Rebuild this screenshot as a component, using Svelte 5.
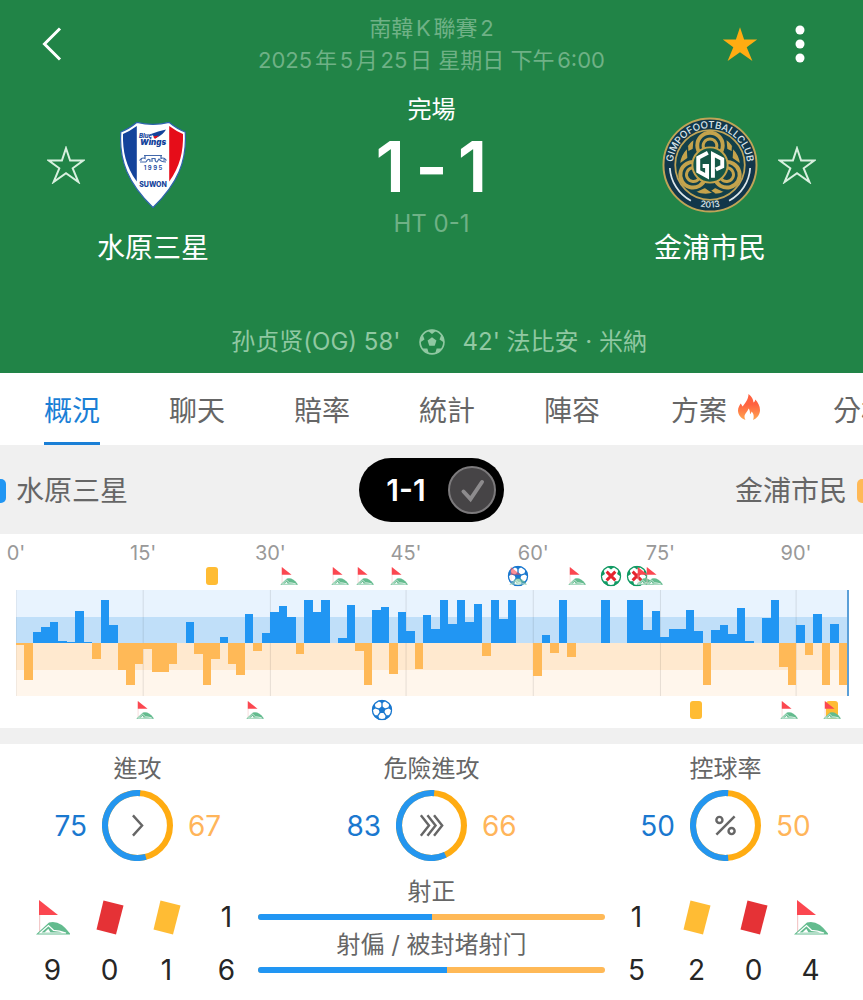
<script>
  const tabs = ['概況', '聊天', '賠率', '統計', '陣容', '方案', '分析'];
  let active = $state('概況');

  // One value per minute: above zero is home pressure, below zero is away pressure.
  const momentum = [
    -2, -37, 11, 16, 21, 2, 1, 32, 1, -16, 43, 18, -27, -42, -21,
    -6, -29, -29, -21, 0, 21, -11, -42, -16, 6, -21, -32, 29, -8, 10,
    31, 37, 26, -11, 43, 31, 43, 0, 5, 38, -8, -42, 33, 36, -31, 31,
    12, -26, 28, 14, 43, 19, 43, 21, 39, -13, 43, 24, 43, 0, 0,
    -33, 8, -10, 43, -14, 0, 0, 0, 43, 0, 0, 43, 43, 13, 32,
    6, 14, 14, 33, 12, -42, 13, 18, 9, 35, 2, 0, 25, 43, -24, -42,
    18, -12, 29, -42, 19, -42
  ];
  const count = momentum.length;
  const ticks = [
    { at: 0, text: "0'" },
    { at: 15, text: "15'" },
    { at: 30, text: "30'" },
    { at: 46, text: "45'" },
    { at: 61, text: "60'" },
    { at: 76, text: "75'" },
    { at: 92, text: "90'" }
  ];
  const homeEvents = [
    { at: 23.1, kind: 'card' },
    { at: 32.2, kind: 'flag' },
    { at: 38.2, kind: 'flag' },
    { at: 41.2, kind: 'flag' },
    { at: 45.2, kind: 'flag' },
    { at: 59.2, kind: 'goal' },
    { at: 59.2, kind: 'flag', faint: true },
    { at: 66.2, kind: 'flag' },
    { at: 70.2, kind: 'miss' },
    { at: 73.2, kind: 'miss' },
    { at: 74.2, kind: 'flag' },
    { at: 75.2, kind: 'flag' }
  ];
  const awayEvents = [
    { at: 15.2, kind: 'flag' },
    { at: 28.2, kind: 'flag' },
    { at: 43.2, kind: 'goal' },
    { at: 80.2, kind: 'card' },
    { at: 91.2, kind: 'flag' },
    { at: 96.2, kind: 'card' },
    { at: 96.2, kind: 'flag' }
  ];
  const rings = [
    { label: '進攻', home: 75, away: 67, icon: 'single' },
    { label: '危險進攻', home: 83, away: 66, icon: 'triple' },
    { label: '控球率', home: 50, away: 50, icon: 'percent' }
  ];
  const shots = [
    { label: '射正', home: 1, away: 1 },
    { label: '射偏 / 被封堵射门', home: 6, away: 5 }
  ];
  const homeCounts = [
    { kind: 'flag', name: '角球', value: 9 },
    { kind: 'red', name: '紅牌', value: 0 },
    { kind: 'yellow', name: '黃牌', value: 1 }
  ];
  const awayCounts = [
    { kind: 'yellow', name: '黃牌', value: 2 },
    { kind: 'red', name: '紅牌', value: 0 },
    { kind: 'flag', name: '角球', value: 4 }
  ];
  const spokes = [0, 72, 144, 216, 288];
  const left = (at) => `left: ${(at / count) * 100}%`;
</script>

{#snippet star(cls)}
  <svg class={cls} viewBox="0 0 38 38" aria-hidden="true">
    <path d="M19 2.2 L23.1 14.6 L36.2 14.6 L25.7 22.3 L31.4 36 L19 27.3 L6.6 36 L12.3 22.3 L1.8 14.6 L14.9 14.6 Z" />
  </svg>
{/snippet}

{#snippet flag()}
  <svg class="flag" viewBox="0 0 34 35" aria-hidden="true">
    <path d="M3.6 1 V33" stroke="#f3c9c9" stroke-width="1.2" />
    <path d="M3 0 L22 15 H3 Z" fill="#fb4750" />
    <path d="M0 34.500 L13 22.500 Q24 19.500 34 33.500 V34.500 Z" fill="#63bb8e" />
    <path d="M4 33 L12.500 25.500 L17.500 30.300 Q23 30.500 30 33 Z" fill="none" stroke="#fff" stroke-width="1.200" />
    <path d="M8.500 32.500 L12.300 28.800 L14.500 32.500 Z" fill="#fff" />
  </svg>
{/snippet}

{#snippet ball(cls, crossed)}
  <svg class={cls} viewBox="-12 -12 24 24" aria-hidden="true">
    <circle class="skin" r="11" />
    {#each spokes as angle}
      <g transform="rotate({angle})">
        <path class="patch" d="M-4.200 -10.600 Q0 -12 4.200 -10.600 L0 -7.300 Z" />
        {#if !crossed}
          <path class="seam" d="M0 -3.500 V-8" />
        {/if}
      </g>
    {/each}
    {#if crossed}
      <path d="M-5 -5 L5 5 M5 -5 L-5 5" stroke="#e5262f" stroke-width="3.400" />
    {:else}
      <path class="patch" d="M0 -4.300 L4.100 -1.300 L2.500 3.500 H-2.500 L-4.100 -1.300 Z" />
    {/if}
  </svg>
{/snippet}

{#snippet card(colour)}
  <svg class="tilted" viewBox="0 0 28 35" aria-hidden="true">
    <path d="M7.500 0.500 L27.500 5.500 L20 34.500 L0.500 29.500 Z" fill={colour} />
  </svg>
{/snippet}

{#snippet events(list)}
  <div class="events">
    {#each list as e}
      <span class="event {e.kind}" class:faint={e.faint} style={left(e.at)}>
        {#if e.kind === 'flag'}
          {@render flag()}
        {:else if e.kind === 'goal'}
          {@render ball('ball blue', false)}
        {:else if e.kind === 'miss'}
          {@render ball('ball green', true)}
        {/if}
      </span>
    {/each}
  </div>
{/snippet}

{#snippet counts(list)}
  <dl class="counts">
    {#each list as c}
      <div>
        <dt aria-label={c.name}>
          {#if c.kind === 'flag'}
            {@render flag()}
          {:else}
            {@render card(c.kind === 'red' ? '#e53236' : '#ffbc34')}
          {/if}
        </dt>
        <dd>{c.value}</dd>
      </div>
    {/each}
  </dl>
{/snippet}

<div class="page">
  <header>
    <div class="topbar">
      <button class="back" aria-label="返回">
        <svg viewBox="0 0 20 36" aria-hidden="true"><path d="M18 2.500 L2.500 18 L18 33.500" /></svg>
      </button>
      <div class="when">
        <div>南韓K聯賽2</div>
        <div>2025年5月25日 星期日 下午6:00</div>
      </div>
      <div class="actions">
        <button aria-label="收藏比賽">{@render star('star full')}</button>
        <button class="more" aria-label="更多">
          <svg viewBox="0 0 24 40" aria-hidden="true">
            <circle cx="12" cy="6" r="4.500" /><circle cx="12" cy="20" r="4.500" /><circle cx="12" cy="34" r="4.500" />
          </svg>
        </button>
      </div>
    </div>

    <div class="match">
      <div class="team home">
        <button aria-label="收藏水原三星">{@render star('star')}</button>
        <svg class="crest shield" viewBox="0 0 66 88" aria-hidden="true">
          <path d="M0.800 11 Q9 8 17 1.300 Q33 5.500 49 1.300 Q57 8 65.200 11 C67 40 58 62 33 86.500 C8 62 -1 40 0.800 11 Z" fill="#fff" stroke="#2d63ad" stroke-width="1.200" />
          <path d="M3 13 Q10 10 16.800 5 V60.500 C6 46 2.500 30 3 13 Z" fill="#14439b" />
          <path d="M63 13 Q56 10 49.200 5 V60.500 C60 46 63.500 30 63 13 Z" fill="#e60d19" />
          <path d="M31 13 Q38 10 46 8.500 Q43 14 36 17 Z" fill="#14439b" />
          <path d="M33 15.500 L39 14.500 L35 18 Z" fill="#e60d19" />
          <text x="19" y="17" font-size="6" font-weight="800" font-style="italic">Blue</text>
          <text x="20" y="24" font-size="8" font-weight="900" font-style="italic">Wings</text>
          <path d="M22 39 H20 Q22 36 25 37.500 V34.500 M24 34.500 H42 M41 34.500 V37.500 Q44 36 46 39 H43 M26 41 Q28 37 30 39 V41 M32 41 V37.500 H35 Q35 41 37 41 L39 38 Q41 41 46 41 M20 41 H26" fill="none" stroke="#4268ab" stroke-width="1.200" />
          <text x="33" y="49" font-size="6" font-weight="600" text-anchor="middle">1 9 9 5</text>
          <text x="33" y="65.500" font-size="7" font-weight="800" text-anchor="middle">SUWON</text>
        </svg>
        <div class="name">水原三星</div>
      </div>

      <div class="result">
        <div class="state">完場</div>
        <div class="score"><span>1</span><span>-</span><span>1</span></div>
        <div class="half">HT 0-1</div>
      </div>

      <div class="team away">
        <svg class="crest" viewBox="-49 -49 98 98" aria-hidden="true">
          <defs>
            <path id="arc-top" d="M-36.500 11 A38 38 0 1 1 36.500 11" />
            <path id="arc-bottom" d="M-30 31.500 A43.500 43.500 0 0 0 30 31.500" />
          </defs>
          <circle r="47.500" fill="#12364a" stroke="#bfa457" stroke-width="2" />
          <circle r="35.500" fill="#12404a" stroke="#bfa457" stroke-width="1.800" />
          <g fill="none" stroke="#c4a34c" stroke-width="4">
            {#each [0, 120, 240] as angle}
              <g transform="rotate({angle})">
                <circle cy="-20" r="13" />
                <path d="M-6.500 -17 A7 7 0 1 1 6.500 -17" stroke-width="3" />
                <path d="M16 -27 L17 -16 L27 -11 Q24 -22 16 -27 Z M-16 -27 L-17 -16 L-27 -11 Q-24 -22 -16 -27 Z" fill="#c4a34c" stroke="#12404a" stroke-width="1.500" />
              </g>
            {/each}
          </g>
          <circle r="18" fill="#155747" stroke="#c4a34c" stroke-width="2" />
          <path d="M-2.200 -12.500 L-12 -7.500 V6.500 L-3 11.500 V1 H-7.500 M3 13 V-11 L12.500 -6 V1.500 L6 4.500" fill="none" stroke="#fff" stroke-width="4" />
          <path d="M-41 3 A41 41 0 0 0 -19.500 36.500 M41 3 A41 41 0 0 1 19.500 36.500" fill="none" stroke="#dce6ea" stroke-width="1.800" />
          <text class="ringtext" font-size="10"><textPath href="#arc-top" startOffset="50%" text-anchor="middle">GIMPOFOOTBALLCLUB</textPath></text>
          <text class="ringtext" font-size="9"><textPath href="#arc-bottom" startOffset="50%" text-anchor="middle">2013</textPath></text>
        </svg>
        <button aria-label="收藏金浦市民">{@render star('star')}</button>
        <div class="name">金浦市民</div>
      </div>
    </div>

    <div class="scorers">
      <span>孙贞贤(OG) 58'</span>
      {@render ball('ball pale', false)}
      <span>42' 法比安 · 米納</span>
    </div>
  </header>

  <nav>
    {#each tabs as tab}
      <button class:active={active === tab} class:hot={tab === '方案'} onclick={() => (active = tab)}>
        {tab}
        {#if tab === '方案'}
          <svg class="flame" viewBox="0 0 22 26" aria-hidden="true">
            <defs>
              <linearGradient id="fire" x1="0" y1="0" x2="0" y2="1">
                <stop offset="0.400" stop-color="#ff6240" />
                <stop offset="1" stop-color="#ffa750" />
              </linearGradient>
            </defs>
            <path fill="url(#fire)" d="M10.500 0 C14 2.500 15 5 15.500 8.500 C16.500 8 17 7 17.300 5.500 C20 8.500 22 12 22 16 C22 20.500 19 24.500 15 26 C16.500 22.500 15.500 19 13.500 17.500 C13.300 19 12.700 19.700 12 20 C12 17 11.500 15.500 10.500 14.500 C10 17.500 6.500 19.500 6.500 22.500 C6.500 24 7 25 7.500 26 C3 24.500 0 20.800 0 16.500 C0 13.500 1.500 11.500 2.700 9.500 C3.500 10.500 4 11.300 4.500 12.500 C7.500 9 10.500 5 10.500 0 Z" />
          </svg>
        {/if}
      </button>
    {/each}
  </nav>

  <div class="legend">
    <div class="side"><i class="swatch blue"></i>水原三星</div>
    <button class="pill" aria-pressed="true">
      1-1
      <svg viewBox="0 0 48 48" aria-hidden="true">
        <circle cx="24" cy="24" r="23" fill="#464446" stroke="#7c7a7c" stroke-width="2" />
        <path d="M15.500 25.500 L22.500 33 L34 16" fill="none" stroke="#8d8b8d" stroke-width="4" stroke-linecap="round" />
      </svg>
    </button>
    <div class="side right">金浦市民<i class="swatch orange"></i></div>
  </div>

  <section class="timeline">
    <div class="axis">
      {#each ticks as t}<span style={left(t.at)}>{t.text}</span>{/each}
    </div>
    {@render events(homeEvents)}
    <svg class="chart" viewBox="0 0 {count} 106" preserveAspectRatio="none" shape-rendering="crispEdges" aria-label="攻勢圖">
      <rect width={count} height="27" fill="#e8f3fe" />
      <rect y="27" width={count} height="26" fill="#c0dff9" />
      <rect y="53" width={count} height="27" fill="#ffe9cf" />
      <rect y="80" width={count} height="26" fill="#fff6ec" />
      {#each ticks as t}
        <path d="M{t.at} 0 V106" stroke="#000" stroke-opacity="0.100" vector-effect="non-scaling-stroke" />
      {/each}
      {#each momentum as v, i}
        <rect x={i} y={v > 0 ? 53 - v : 53} width="1" height={Math.abs(v)} fill={v > 0 ? '#2196f3' : '#ffb957'} />
      {/each}
    </svg>
    {@render events(awayEvents)}
  </section>

  <section class="rings">
    {#each rings as r}
      {@const away = (r.away / (r.home + r.away)) * 100}
      <div class="ring">
        <div class="label">{r.label}</div>
        <div class="values">
          <span class="h">{r.home}</span>
          <svg viewBox="-35 -35 70 70" aria-hidden="true">
            <circle r="32" fill="none" stroke="#ffac12" stroke-width="6" />
            <circle r="32" fill="none" stroke="#2496ef" stroke-width="6" pathLength="100" stroke-dasharray="{102.6 - away} 100" transform="rotate({(away - 1.3) * 3.6 - 90})" />
            <g fill="none" stroke="#666" stroke-width="2.400">
              {#if r.icon === 'single'}
                <path d="M-4.500 -10 L4.500 0 L-4.500 10" />
              {:else if r.icon === 'triple'}
                <path d="M-10.500 -10 L-2.500 0 L-10.500 10 M-4 -10 L4 0 L-4 10 M2.500 -10 L10.500 0 L2.500 10" />
              {:else}
                <path d="M9 -9 L-9 9" />
                <circle cx="-6" cy="-5.500" r="3" />
                <circle cx="6" cy="5.500" r="3" />
              {/if}
            </g>
          </svg>
          <span class="a">{r.away}</span>
        </div>
      </div>
    {/each}
  </section>

  <section class="totals">
    {@render counts(homeCounts)}
    <div class="shots">
      {#each shots as s}
        <div class="shot">
          <span class="num">{s.home}</span>
          <div class="meter">
            <div class="label">{s.label}</div>
            <div class="bar"><i style="width: {(s.home / (s.home + s.away)) * 100}%"></i></div>
          </div>
          <span class="num">{s.away}</span>
        </div>
      {/each}
    </div>
    {@render counts(awayCounts)}
  </section>
</div>

<style>
  :global(body) {
    margin: 0;
    background: #fff;
  }
  .page {
    font-family: Inter, 'Noto Sans CJK TC', sans-serif;
    text-autospace: normal;
    color: #666;
    overflow: hidden;
  }
  svg {
    display: block;
    flex: none;
  }
  button {
    font: inherit;
    color: inherit;
    background: none;
    border: 0;
    padding: 0;
    cursor: pointer;
  }

  header {
    background: #218447;
    color: #fff;
    padding: 12px 0 15px;
  }
  .topbar {
    display: grid;
    grid-template-columns: 1fr auto 1fr;
    align-items: center;
    padding: 0 51px 0 42px;
  }
  .back svg {
    width: 20px;
    height: 36px;
    fill: none;
    stroke: #fff;
    stroke-width: 3;
  }
  .back {
    justify-self: start;
  }
  .when {
    font-size: 22px;
    line-height: 32px;
    text-align: center;
    color: #6fb186;
    white-space: nowrap;
    margin-left: 9px;
  }
  .actions {
    display: flex;
    justify-content: flex-end;
    align-items: center;
    gap: 29px;
  }
  .more svg {
    width: 24px;
    height: 40px;
    fill: #fff;
  }
  .star {
    width: 38px;
    height: 38px;
    fill: none;
    stroke: #d8f0df;
    stroke-width: 2;
  }
  .star.full {
    fill: #ffac12;
    stroke: none;
  }

  .match {
    display: grid;
    grid-template-columns: 1fr auto 1fr;
    padding: 18px 47px 0;
  }
  .team {
    display: grid;
    grid-template-columns: 38px 112px;
    column-gap: 12px;
    row-gap: 17px;
    align-items: center;
    align-content: start;
    justify-items: center;
    padding-top: 23px;
  }
  .team.away {
    grid-template-columns: 112px 38px;
    justify-content: end;
  }
  .crest {
    width: 98px;
    height: 96px;
  }
  .crest.shield {
    width: 66px;
    height: 88px;
    margin: 4px 0;
  }
  .crest text {
    fill: #14439b;
  }
  .crest .ringtext {
    fill: #dce6ea;
    font-weight: 500;
  }
  .name {
    font-size: 28px;
    line-height: 36px;
    white-space: nowrap;
  }
  .home .name {
    grid-column: 2;
  }
  .result {
    text-align: center;
  }
  .state {
    font-size: 24px;
    line-height: 32px;
  }
  .score {
    display: flex;
    justify-content: center;
    gap: 10px;
    font-size: 70px;
    line-height: 72px;
    font-weight: 600;
    margin: 5px 0;
  }
  .half {
    font-size: 24px;
    line-height: 32px;
    color: #6fb186;
  }
  .scorers {
    display: grid;
    grid-template-columns: 1fr auto 1fr;
    align-items: center;
    gap: 18px;
    margin-top: 60px;
    font-size: 24px;
    line-height: 32px;
    color: #90c8a2;
    white-space: nowrap;
  }
  .scorers span:first-child {
    text-align: right;
  }

  .ball {
    width: 21px;
    height: 21px;
  }
  .ball .skin {
    fill: #fff;
    stroke-width: 1.5;
  }
  .ball .seam {
    fill: none;
    stroke-width: 1.5;
  }
  .blue .patch {
    fill: #1a78cf;
  }
  .blue .skin,
  .blue .seam {
    stroke: #1a78cf;
  }
  .green .patch {
    fill: #119a63;
  }
  .green .skin {
    stroke: #119a63;
  }
  .ball.pale {
    width: 26px;
    height: 26px;
  }
  .pale .skin {
    fill: none;
    stroke: #90c8a2;
  }
  .pale .patch {
    fill: #90c8a2;
  }
  .pale .seam {
    stroke: none;
  }

  nav {
    display: flex;
    gap: 69px;
    height: 72px;
    padding-left: 44px;
    overflow: hidden;
  }
  nav button {
    display: flex;
    flex: none;
    align-items: center;
    gap: 11px;
    font-size: 28px;
    line-height: 40px;
    white-space: nowrap;
    border-top: 6px solid transparent;
    border-bottom: 3px solid transparent;
  }
  nav .hot {
    padding: 0 2px;
  }
  nav .active {
    color: #1a7fd6;
    border-bottom-color: #1a7fd6;
  }
  .flame {
    width: 22px;
    height: 26px;
    margin: 0 2px 8px 0;
  }

  .legend {
    display: grid;
    grid-template-columns: 1fr auto 1fr;
    align-items: center;
    height: 89px;
    background: #f0f0f0;
    font-size: 28px;
    line-height: 40px;
    overflow: hidden;
  }
  .side {
    display: flex;
    align-items: center;
    gap: 10px;
    padding-top: 2px;
  }
  .side.right {
    justify-content: flex-end;
  }
  .swatch {
    width: 24px;
    height: 24px;
    border-radius: 5px;
    margin-left: -18px;
    background: #2196f3;
  }
  .swatch.orange {
    margin-left: 0;
    margin-right: -18px;
    background: #ffb957;
  }
  .pill {
    display: flex;
    align-items: center;
    gap: 22px;
    height: 64px;
    padding: 0 8px 0 27px;
    border-radius: 32px;
    background: #000;
    color: #fff;
    font-size: 30px;
    font-weight: 600;
  }
  .pill svg {
    width: 48px;
    height: 48px;
  }

  .timeline {
    padding: 7px 16px;
    border-bottom: 16px solid #f0f0f0;
  }
  .axis,
  .events {
    position: relative;
    height: 24px;
  }
  .events {
    height: 22px;
  }
  .axis span,
  .event {
    position: absolute;
    top: 50%;
    transform: translate(-50%, -50%);
  }
  .axis span {
    font-size: 20px;
    line-height: 24px;
    color: #999;
  }
  .event .flag {
    width: 18px;
    height: 18px;
  }
  .event.card {
    width: 12px;
    height: 18px;
    border-radius: 3px;
    background: #ffbc34;
  }
  .faint {
    opacity: 0.6;
  }
  .chart {
    width: 100%;
    height: 106px;
    margin: 3px 0;
    border-right: 2px solid #5a9fd8;
  }

  .rings {
    display: flex;
    justify-content: space-between;
    padding: 7px 53px 12px;
  }
  .ring {
    text-align: center;
  }
  .label {
    font-size: 24px;
    line-height: 36px;
    text-align: center;
    white-space: nowrap;
  }
  .values {
    display: grid;
    grid-template-columns: 34px 71px 34px;
    align-items: center;
    gap: 15px;
    margin-top: 3px;
    font-size: 28px;
    line-height: 36px;
  }
  .values svg {
    width: 71px;
    height: 71px;
  }
  .h {
    color: #1a78cf;
    justify-self: end;
  }
  .a {
    color: #ffb55a;
    justify-self: start;
  }

  .totals {
    display: flex;
    padding: 0 24px 22px;
    font-size: 28px;
    line-height: 18px;
    color: #262626;
  }
  .counts {
    display: flex;
    margin: 0;
    padding-top: 27px;
  }
  .counts div {
    display: flex;
    flex-direction: column;
    align-items: center;
    justify-content: space-between;
    width: 57px;
  }
  .counts dd {
    margin: 0;
  }
  .counts .flag {
    width: 34px;
    height: 35px;
  }
  .tilted {
    width: 28px;
    height: 35px;
  }
  .shots {
    flex: 1;
  }
  .shot {
    display: grid;
    grid-template-columns: 63px 1fr 63px;
    align-items: end;
    text-align: center;
  }
  .meter {
    padding-bottom: 6px;
    color: #666;
  }
  .meter .label {
    line-height: 38px;
  }
  .bar {
    height: 6px;
    margin-top: 3px;
    border-radius: 3px;
    background: #ffb957;
    overflow: hidden;
  }
  .bar i {
    display: block;
    height: 100%;
    background: #2196f3;
  }
</style>
